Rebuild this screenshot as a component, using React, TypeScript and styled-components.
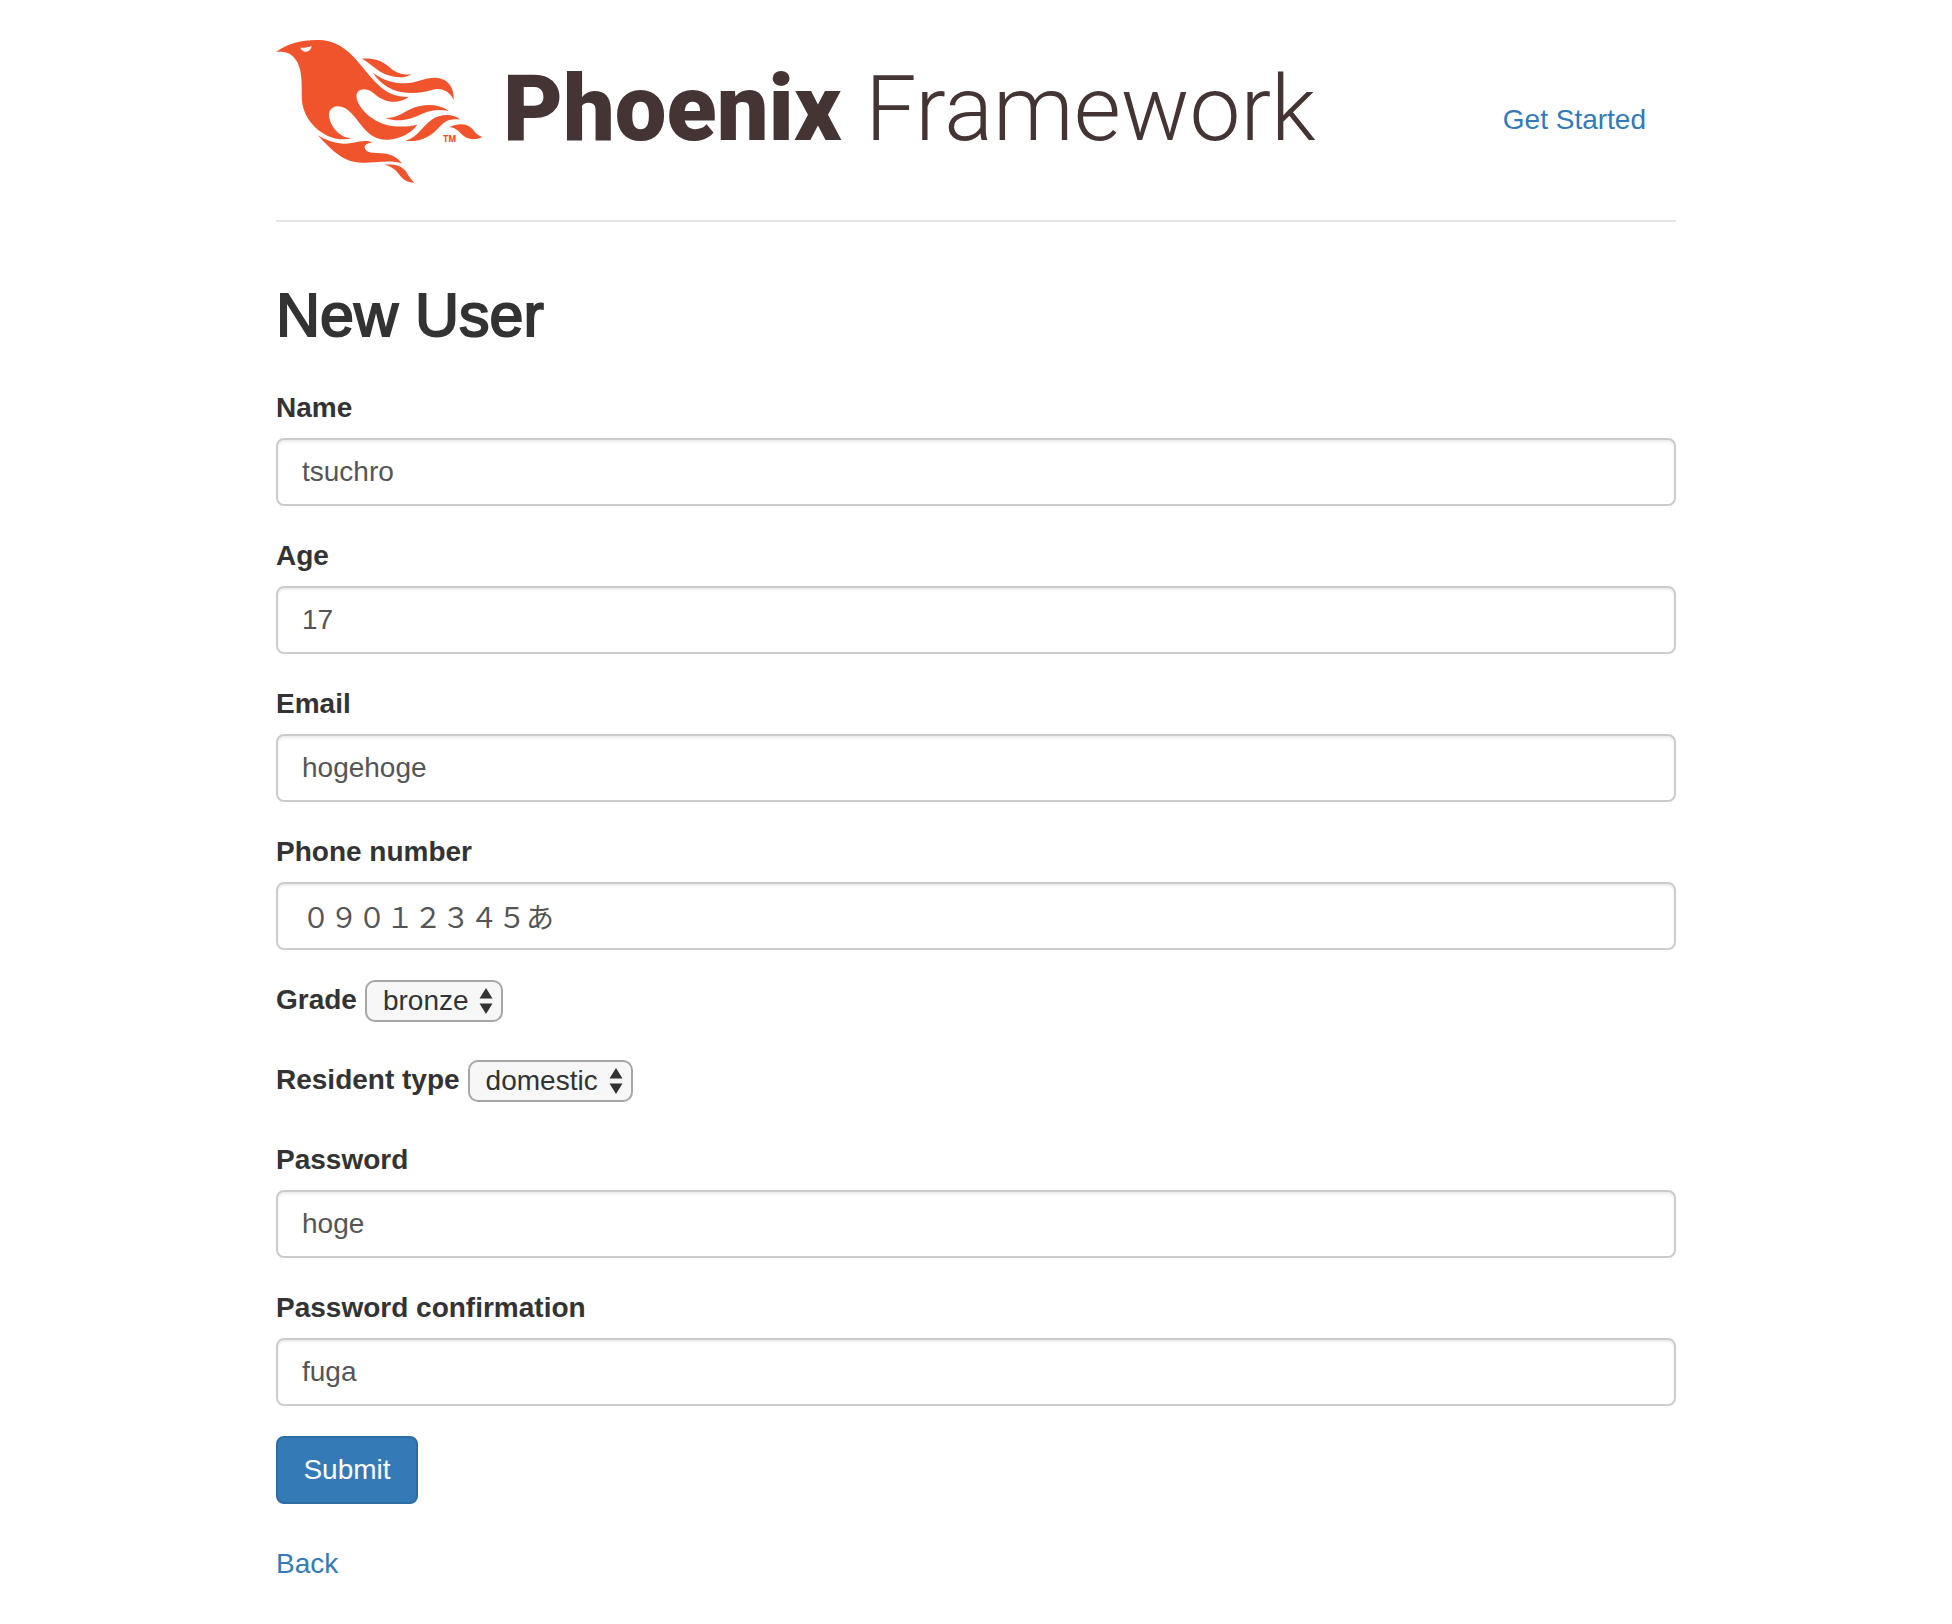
import React from "react";
import styled, { createGlobalStyle } from "styled-components";

const GlobalStyle = createGlobalStyle`
  *, *::before, *::after { box-sizing: border-box; }
  body {
    margin: 0;
    background: #fff;
    color: #333;
    font-family: "Liberation Sans", "Noto Sans CJK JP", sans-serif;
    font-size: 28px;
    line-height: 40px;
  }
`;

const Container = styled.div`
  max-width: 1460px;
  margin: 0 auto;
  padding: 40px 30px;
`;

const Header = styled.header`
  display: flex;
  flex-wrap: wrap;
  align-items: flex-start;
  justify-content: space-between;
  padding-bottom: 36px;
  border-bottom: 2px solid #e5e5e5;
`;

const Logo = styled.div`
  display: flex;
  align-items: flex-start;
  gap: 20px;
  color: #443434;
  font-family: Roboto, sans-serif;
  line-height: 138px;
  white-space: nowrap;
`;

const Bird = styled.svg`
  flex: none;
  width: 207px;
  height: 144px;
  fill: #f0542d;
`;

const Wordmark = styled.div`
  display: flex;
  align-items: baseline;
  gap: 24px;
`;

const Strong = styled.span`
  font-size: 92px;
  font-weight: 900;
`;

const Light = styled.span`
  font-size: 91px;
  font-weight: 300;
`;

const Nav = styled.nav`
  padding: 60px 30px 0;
`;

const Link = styled.a`
  color: #337ab7;
  text-decoration: none;
  &:hover { text-decoration: underline; }
`;

const Title = styled.h2`
  margin: 60px 0 40px;
  font-size: 61px;
  font-weight: 500;
  line-height: 66px;
  -webkit-text-stroke: 2px currentColor;
`;

const Form = styled.form`
  margin-bottom: 40px;
`;

const Group = styled.div`
  margin-bottom: 30px;
`;

const InlineGroup = styled(Group)`
  display: flex;
  align-items: flex-start;
  gap: 8px;
`;

const Label = styled.label`
  display: block;
  margin-bottom: 10px;
  font-weight: 700;
`;

const Input = styled.input`
  display: block;
  width: 100%;
  height: 68px;
  padding: 12px 24px;
  border: 2px solid #ccc;
  border-radius: 8px;
  background: #fff;
  box-shadow: inset 0 2px 2px rgba(0, 0, 0, 0.075);
  color: #555;
  font: inherit;
`;

const SelectWrap = styled.div`
  position: relative;
`;

const Select = styled.select`
  display: block;
  appearance: none;
  height: 42px;
  padding: 0 32px 0 16px;
  border: 2px solid #a6a6a6;
  border-radius: 10px;
  background: #f7f7f7;
  color: #333;
  font: inherit;
  line-height: 36px;
`;

const Arrows = styled.svg`
  position: absolute;
  top: 8px;
  right: 10px;
  width: 14px;
  height: 26px;
  fill: #333;
  pointer-events: none;
`;

const Button = styled.button`
  min-width: 142px;
  padding: 12px 24px;
  border: 2px solid #2e6da4;
  border-radius: 8px;
  background: #337ab7;
  color: #fff;
  font: inherit;
  cursor: pointer;
`;

function TextField({ id, label, value }: { id: string; label: string; value: string }) {
  return (
    <Group>
      <Label htmlFor={id}>{label}</Label>
      <Input id={id} name={id} type="text" defaultValue={value} />
    </Group>
  );
}

function SelectField({ id, label, options }: { id: string; label: string; options: string[] }) {
  return (
    <InlineGroup>
      <Label htmlFor={id}>{label}</Label>
      <SelectWrap>
        <Select id={id} name={id}>
          {options.map((option) => (
            <option key={option}>{option}</option>
          ))}
        </Select>
        <Arrows viewBox="0 0 14 26" aria-hidden="true">
          <path d="M7 0L13.500 10.500H.5zM7 26L.5 15.500H13.500z" />
        </Arrows>
      </SelectWrap>
    </InlineGroup>
  );
}

function PhoenixBird() {
  return (
    <Bird viewBox="30 30 621 432" aria-hidden="true">
      <path
        fillRule="evenodd"
        d="M30 66C62 42 103 30 152 30C190 29 222 43 250 68C282 98 306 135 335 163C362 190 389 201 428 201C416 211 396 216 377 215C350 213 333 198 318 186C304 176 285 174 275 186C267 198 273 215 284 231C303 258 332 277 362 285C393 292 425 291 454 284C438 307 406 325 369 329C335 332 311 316 290 291C273 270 258 248 238 235C220 225 199 226 191 243C184 261 195 285 211 303C224 317 240 325 260 325C235 331 207 328 184 317C145 297 116 263 109 221C105 190 110 158 103 123C98 99 87 78 65 69C52 65 41 65 30 66ZM103 53C107 64 116 67 126 64C132 61 136 56 137 48C126 52 115 54 103 53Z"
      />
      <path d="M288 86C319 84 346 91 366 108C387 127 408 139 437 131C423 144 393 145 367 136C333 124 316 102 288 86Z" />
      <path d="M321 129C352 151 382 160 415 160C451 159 477 142 510 143C546 145 565 172 563 210C551 183 525 171 498 180C468 188 440 192 405 186C369 179 341 159 321 129Z" />
      <path d="M358 264C397 264 415 243 443 233C481 220 521 223 549 243C519 237 495 239 467 252C434 268 399 279 358 264Z" />
      <path d="M418 332C453 323 468 290 497 269C524 250 563 251 583 269C546 263 535 276 518 293C489 325 456 337 418 332Z" />
      <path d="M549 292C576 279 603 278 620 298C629 310 637 318 649 321C626 332 602 329 587 313C575 300 565 292 549 292Z" />
      <path d="M155 316C178 330 203 339 231 341C263 343 285 325 320 337C308 340 295 342 296 352C298 366 312 369 330 369C362 368 390 376 408 400C380 391 353 395 324 397C285 400 254 398 226 380C198 363 177 338 155 316Z" />
      <path d="M354 404C383 402 407 406 421 426C429 440 436 449 445 458C424 457 411 449 400 434C388 417 374 408 354 404Z" />
      <text x="531" y="335" fontFamily="Roboto, sans-serif" fontSize="26" fontWeight="900">
        TM
      </text>
    </Bird>
  );
}

export default function App() {
  return (
    <>
      <GlobalStyle />
      <Container>
        <Header>
          <Logo>
            <PhoenixBird />
            <Wordmark>
              <Strong>Phoenix</Strong>
              <Light>Framework</Light>
            </Wordmark>
          </Logo>
          <Nav>
            <Link href="#get-started">Get Started</Link>
          </Nav>
        </Header>
        <main>
          <Title>New User</Title>
          <Form onSubmit={(event) => event.preventDefault()}>
            <TextField id="name" label="Name" value="tsuchro" />
            <TextField id="age" label="Age" value="17" />
            <TextField id="email" label="Email" value="hogehoge" />
            <TextField id="phone" label="Phone number" value="０９０１２３４５あ" />
            <SelectField id="grade" label="Grade" options={["bronze"]} />
            <SelectField id="resident" label="Resident type" options={["domestic"]} />
            <TextField id="password" label="Password" value="hoge" />
            <TextField id="confirmation" label="Password confirmation" value="fuga" />
            <Button type="submit">Submit</Button>
          </Form>
          <Link href="#back">Back</Link>
        </main>
      </Container>
    </>
  );
}
